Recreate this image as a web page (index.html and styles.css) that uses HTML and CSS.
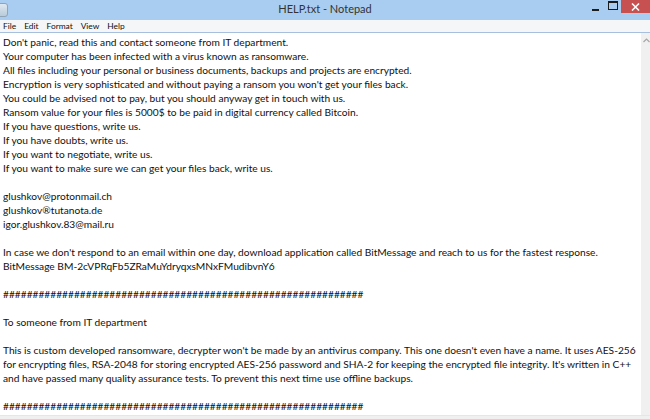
FILE: index.html
```html
<!DOCTYPE html>
<html>
<head>
<meta charset="utf-8">
<title>HELP.txt - Notepad</title>
<link rel="stylesheet" href="styles.css">
</head>
<body>
<div class="window">
  <div class="titlebar">
    <div class="app-icon"></div>
    <div class="title">HELP.txt - Notepad</div>
    <div class="controls">
      <div class="ctl ctl-min"><span class="min-bar"></span></div>
      <div class="ctl ctl-max"><span class="max-box"></span></div>
      <div class="ctl ctl-close">
        <svg width="9" height="8" viewBox="0 0 9 8"><path d="M1 0.5 L8 7.5 M8 0.5 L1 7.5" stroke="#fff" stroke-width="1.6"/></svg>
      </div>
    </div>
  </div>
  <div class="menubar">
    <span class="menu-item">File</span>
    <span class="menu-item">Edit</span>
    <span class="menu-item">Format</span>
    <span class="menu-item">View</span>
    <span class="menu-item">Help</span>
  </div>
  <div class="client">
    <div class="editor"><pre class="text">Don't panic, read this and contact someone from IT department.
Your computer has been infected with a virus known as ransomware.
All files including your personal or business documents, backups and projects are encrypted.
Encryption is very sophisticated and without paying a ransom you won't get your files back.
You could be advised not to pay, but you should anyway get in touch with us.
Ransom value for your files is 5000$ to be paid in digital currency called Bitcoin.
If you have questions, write us.
If you have doubts, write us.
If you want to negotiate, write us.
If you want to make sure we can get your files back, write us.

glushkov@protonmail.ch
glushkov®tutanota.de
igor.glushkov.83@mail.ru

In case we don't respond to an email within one day, download application called BitMessage and reach to us for the fastest response.
BitMessage BM-2cVPRqFb5ZRaMuYdryqxsMNxFMudibvnY6

#############################################################

To someone from IT department

This is custom developed ransomware, decrypter won't be made by an antivirus company. This one doesn't even have a name. It uses AES-256
for encrypting files, RSA-2048 for storing encrypted AES-256 password and SHA-2 for keeping the encrypted file integrity. It's written in C++
and have passed many quality assurance tests. To prevent this next time use offline backups.

#############################################################</pre></div>
    <div class="vscroll">
      <svg class="up-arrow" width="7" height="5" viewBox="0 0 7 5"><path d="M0.5 4 L3.5 1 L6.5 4" fill="none" stroke="#a6a6a6" stroke-width="1.2"/></svg>
    </div>
  </div>
  <div class="hscroll"></div>
</div>
</body>
</html>
```
FILE: styles.css
```css
html, body {
  margin: 0;
  padding: 0;
  background: #ffffff;
}
.window {
  width: 650px;
  height: 419px;
  display: flex;
  flex-direction: column;
  overflow: hidden;
  font-family: Lato, "Open Sans", sans-serif;
}
.titlebar {
  height: 20px;
  flex: none;
  background: #a9cdf0;
  position: relative;
  display: flex;
  align-items: flex-start;
}
.app-icon {
  position: absolute;
  left: -4px;
  top: 3px;
  width: 12px;
  height: 14px;
  border-radius: 3px;
  background: linear-gradient(180deg, #dfe9f2 0%, #b9cbd9 100%);
  border: 1px solid #8fa4b6;
  box-sizing: border-box;
}
.title {
  flex: 1;
  text-align: center;
  font-size: 11px;
  line-height: 17px;
  color: #333333;
}
.controls {
  position: absolute;
  right: 0;
  top: 0;
  display: flex;
  align-items: flex-start;
}
.ctl {
  height: 14px;
  display: flex;
  align-items: center;
  justify-content: center;
}
.ctl-min { width: 17px; }
.min-bar {
  width: 7px;
  height: 2px;
  background: #1c1c1c;
  margin-top: 5px;
}
.ctl-max { width: 17px; }
.max-box {
  width: 8px;
  height: 6px;
  border: 1px solid #1c1c1c;
  border-top-width: 2px;
  margin-top: -4px;
}
.ctl-close {
  width: 29px;
  height: 13px;
  background: #c75150;
}
.menubar {
  height: 12px;
  flex: none;
  background: #f5f6f7;
  border-bottom: 1px solid #a6bfdc;
  display: flex;
  align-items: center;
  padding-left: 3px;
}
.menu-item {
  font-size: 8.4px;
  line-height: 12px;
  color: #111;
  margin-right: 8px;
}
.client {
  flex: 1;
  display: flex;
  min-height: 0;
}
.editor {
  flex: 1;
  padding: 2px 0 0 3px;
  overflow: hidden;
}
.text {
  margin: 0;
  font-family: Lato, "Open Sans", sans-serif;
  font-size: 10.2px;
  line-height: 14px;
  color: #111;
  white-space: pre;
}
.vscroll {
  width: 9px;
  flex: none;
  background: #f0f0f0;
  display: flex;
  justify-content: flex-end;
  align-items: flex-start;
}
.up-arrow {
  margin-top: 5px;
}
.hscroll {
  height: 3px;
  flex: none;
  background: #f0f0f0;
  border-top: 1px solid #e6e6e6;
}
```
